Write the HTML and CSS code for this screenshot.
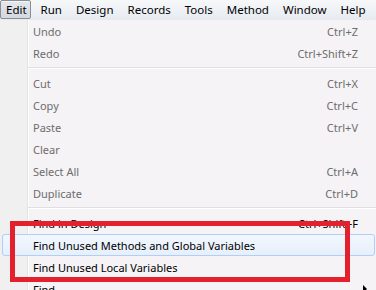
FILE: index.html
```html
<!DOCTYPE html>
<html lang="en">
<head>
  <meta charset="UTF-8" />
  <title>Edit menu</title>
  <link rel="stylesheet" href="styles.css">
</head>
<body>

<div class="menubar">
  <span class="top open">Edit</span>
  <span class="top">Run</span>
  <span class="top">Design</span>
  <span class="top">Records</span>
  <span class="top">Tools</span>
  <span class="top">Method</span>
  <span class="top">Window</span>
  <span class="top">Help</span>
</div>

<div class="menu">
  <div class="item off"><span>Undo</span><span class="key">Ctrl+Z</span></div>
  <div class="item off"><span>Redo</span><span class="key">Ctrl+Shift+Z</span></div>
  <div class="sep"></div>
  <div class="item off"><span>Cut</span><span class="key">Ctrl+X</span></div>
  <div class="item off"><span>Copy</span><span class="key">Ctrl+C</span></div>
  <div class="item off"><span>Paste</span><span class="key">Ctrl+V</span></div>
  <div class="item off"><span>Clear</span></div>
  <div class="item off"><span>Select All</span><span class="key">Ctrl+A</span></div>
  <div class="item off"><span>Duplicate</span><span class="key">Ctrl+D</span></div>
  <div class="sep"></div>
  <div class="item"><span>Find in Design</span><span class="key">Ctrl+Shift+F</span></div>
  <div class="item hover"><span>Find Unused Methods and Global Variables</span></div>
  <div class="item"><span>Find Unused Local Variables</span></div>
  <div class="item"><span>Find</span><span class="arrow"></span></div>

  <!-- annotation drawn over the menu -->
  <div class="callout"></div>
</div>

</body>
</html>
```

FILE: styles.css
```css
body {
  margin: 0;
  width: 376px;
  height: 290px;
  overflow: hidden;
  font-family: "Noto Sans", "Open Sans", sans-serif;
  font-size: 11px;
  background: #f5f3f5;
}

.menubar {
  display: flex;
  height: 20px;
  align-items: flex-start;
  background: linear-gradient(to bottom, #f7f8fa, #e6eaf0);
  color: #000;
}

.top {
  height: 19px;
  line-height: 18px;
  padding: 0 6px;
  box-sizing: border-box;
  border: 1px solid transparent;
  font-size: 11.5px;
}

.top.open {
  padding: 0 3px 0 5px;
  margin-right: 3px;
  border-color: #8c8e94;
  border-radius: 2px;
  background: linear-gradient(to bottom, #e4e7ec, #d4d8df);
  box-shadow: inset 0 1px 0 #f4f5f7;
}

.menu {
  position: relative;
  height: 270px;
  overflow: hidden;
  background: linear-gradient(to right, #f0f0f0 0 27px, #e2e3e3 27px 28px, #fff 28px 29px, #f5f3f5 29px);
}

.item {
  display: flex;
  justify-content: space-between;
  align-items: center;
  height: 22px;
  margin: 0 1px 0 2px;
  padding: 0 16px 0 30px;
  color: #000;
  box-sizing: border-box;
  border: 1px solid transparent;
}

.item.off {
  color: #6d6d6d;
}

.item.hover {
  border-color: #aecff7;
  border-radius: 3px;
  background: linear-gradient(to bottom, #f2f7fd, #e6effb);
}

.key {
  color: #6d6d6d;
}

.item:not(.off) .key {
  color: #000;
}

.sep {
  height: 8px;
  margin-left: 28px;
  background: linear-gradient(to bottom, transparent 3px, #e0e0e0 3px 4px, #fff 4px 5px, transparent 5px);
}

.arrow {
  width: 0;
  height: 0;
  margin-right: -9px;
  border-left: 4px solid #000;
  border-top: 4px solid transparent;
  border-bottom: 4px solid transparent;
}

.callout {
  position: absolute;
  left: 10px;
  top: 201px;
  width: 340px;
  height: 61px;
  box-sizing: border-box;
  border: 5px solid #e3202b;
}
```
